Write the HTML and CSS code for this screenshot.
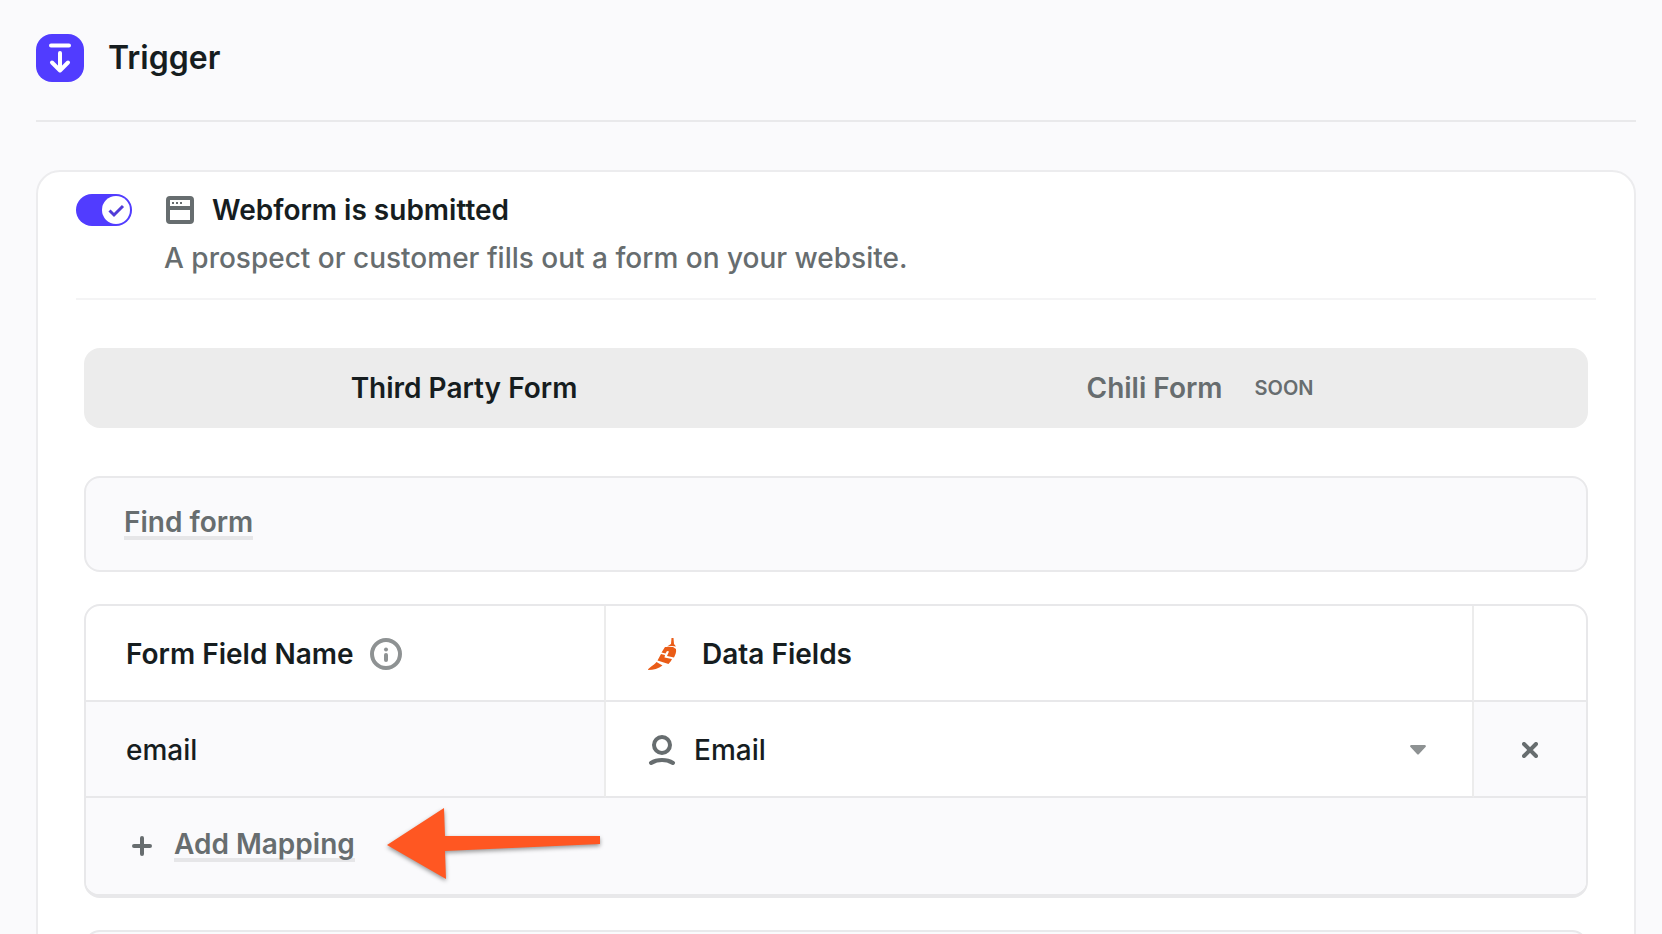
FILE: index.html
```html
<!DOCTYPE html>
<html lang="en">
  <head>
    <meta charset="UTF-8" />
    <meta name="viewport" content="width=device-width, initial-scale=1.0" />
    <title>Trigger</title>
    <link rel="stylesheet" href="styles.css">
  </head>

  <body>
    <header class="page-header">
      <span class="trigger-icon">
        <svg width="48" height="48" viewBox="0 0 48 48" fill="none" stroke="#fff" stroke-width="4" stroke-linecap="round" stroke-linejoin="round">
          <path d="M15 11.500h18M24 19v17M16 28.500l8 8 8-8" />
        </svg>
      </span>
      <h1>Trigger</h1>
    </header>

    <main class="card">
      <section class="option">
        <label class="toggle">
          <input type="checkbox" id="webform" aria-label="Webform is submitted" checked />
          <svg class="toggle-check" width="28" height="28" viewBox="0 0 28 28" fill="none" stroke="#513cd8" stroke-width="3">
            <path d="M7.500 14.500l4.500 4.500 9-9" />
          </svg>
        </label>
        <div class="option-text">
          <label class="option-title" for="webform">
            <svg width="28" height="28" viewBox="0 0 28 28">
              <rect x="2" y="2" width="24" height="24" rx="2" fill="none" stroke="#676d6f" stroke-width="4" />
              <path d="M2 12h24" stroke="#676d6f" stroke-width="4" />
              <path d="M6 6h2v2h-2zM10 6h2v2h-2zM14 6h2v2h-2z" fill="#676d6f" />
            </svg>
            Webform is submitted
          </label>
          <p>A prospect or customer fills out a form on your website.</p>
        </div>
      </section>

      <div class="content">
        <div class="tabs">
          <button type="button" class="tab active">Third Party Form</button>
          <button type="button" class="tab">Chili Form <span class="soon">SOON</span></button>
        </div>

        <div class="box">
          <button type="button" class="link-button">Find form</button>
        </div>

        <div class="mapping">
          <table>
            <colgroup>
              <col class="col-name" />
              <col />
              <col class="col-remove" />
            </colgroup>
            <thead>
              <tr>
                <th>
                  <div class="cell">
                    Form Field Name
                    <svg width="32" height="32" viewBox="0 0 32 32" fill="none" stroke="#8e9293" stroke-width="4" stroke-linecap="round">
                      <circle cx="16" cy="16" r="14" />
                      <path d="M16 17v5" />
                      <circle cx="16" cy="11.500" r="2" fill="#8e9293" stroke="none" />
                    </svg>
                  </div>
                </th>
                <th>
                  <div class="cell">
                    <svg class="chili" width="32" height="32" viewBox="0 0 32 32" fill="#ea5c17">
                      <path d="M23.500 0h2l.5 6 2 2.500-4-.5-5 .5 4-2.500z" />
                      <path d="M17 9h8l3 2c.5 3-.5 5.500-2 8.500l-7-1.500 2-4.500-2-.5-1.500 2.500-4-1z" />
                      <path d="M13 16l4 1-.5 2.500 7.500 1.500c-1 2-2 3.500-3.500 5l-11-3.500z" />
                      <path d="M8.500 24l6 3.500c-4 3-9 4.500-14.500 4.500 0-2 5-4 8.500-8z" />
                    </svg>
                    Data Fields
                  </div>
                </th>
                <th></th>
              </tr>
            </thead>
            <tbody>
              <tr>
                <td class="shaded">
                  <input type="text" class="field-name" value="email" aria-label="Form field name" />
                </td>
                <td>
                  <div class="select">
                    <svg width="28" height="32" viewBox="0 0 28 32" fill="none" stroke="#676d6f" stroke-width="4" stroke-linecap="round">
                      <circle cx="14" cy="11" r="8" />
                      <path d="M3 29c6-4 16-4 22 0" />
                    </svg>
                    <select aria-label="Data field">
                      <option>Email</option>
                    </select>
                    <svg class="caret" width="16" height="10" viewBox="0 0 16 10" fill="#8e9293">
                      <path d="M1 0h14q1.500 1 .5 2l-6.500 7q-1 1-2 0l-6.500-7q-1-1 .5-2z" />
                    </svg>
                  </div>
                </td>
                <td class="shaded">
                  <button type="button" class="remove" aria-label="Remove mapping">
                    <svg width="16" height="16" viewBox="0 0 16 16" stroke="#676d6f" stroke-width="4" stroke-linecap="round">
                      <path d="M2 2l12 12M14 2L2 14" />
                    </svg>
                  </button>
                </td>
              </tr>
            </tbody>
          </table>
          <div class="add-row">
            <svg width="20" height="20" viewBox="0 0 20 20" stroke="#676d6f" stroke-width="4" stroke-linecap="round">
              <path d="M10 2v16M2 10h16" />
            </svg>
            <button type="button" class="link-button">Add Mapping</button>
            <svg class="arrow" width="216" height="78" viewBox="0 0 216 78" fill="#ff5722">
              <path d="M0 38L57 1l1 28h155v8L58 44l1 28z" />
            </svg>
          </div>
        </div>

        <div class="box"></div>
      </div>
    </main>
  </body>
</html>
```

FILE: styles.css
```css
* {
  box-sizing: border-box;
}

body {
  margin: 0;
  padding: 0 26px 0 36px;
  height: 100vh;
  overflow: hidden;
  font-family: Inter, sans-serif;
  font-size: 28px;
  line-height: 36px;
  color: #161d1f;
  background-color: #fafafc;
}

svg {
  display: block;
  flex: none;
}

button,
input,
select {
  font: inherit;
  color: inherit;
  background: none;
  border: none;
  padding: 0;
  margin: 0;
}

button {
  cursor: pointer;
}

.page-header {
  display: flex;
  align-items: center;
  gap: 24px;
  padding: 34px 0 38px;
  border-bottom: 2px solid #e9e9eb;
}

.trigger-icon {
  background-color: #513cff;
  border-radius: 16px;
}

h1 {
  margin: 0;
  font-size: 32px;
  line-height: 40px;
  font-weight: 600;
}

.card {
  margin-top: 48px;
  padding: 22px 38px 40px;
  background-color: #fff;
  border: 2px solid #ececee;
  border-radius: 24px;
}

.option {
  display: flex;
  gap: 32px;
  padding-bottom: 22px;
  border-bottom: 2px solid #f4f4f5;
}

.toggle {
  position: relative;
  height: 32px;
}

.toggle input {
  display: block;
  appearance: none;
  width: 56px;
  height: 32px;
  border-radius: 16px;
  background-color: #676d6f;
}

.toggle input:checked {
  background-color: #513cff;
}

.toggle-check {
  position: absolute;
  top: 2px;
  right: 2px;
  border-radius: 50%;
  background-color: #fff;
}

.option-title {
  display: flex;
  align-items: center;
  gap: 18px;
  padding-left: 2px;
  line-height: 32px;
  font-weight: 600;
}

.option-text p {
  margin: 14px 0 0;
  font-weight: 500;
  color: #676d6f;
}

.content {
  padding: 48px 8px 0;
}

.tabs {
  display: flex;
  height: 80px;
  padding: 8px;
  border-radius: 16px;
  background-color: #ececec;
}

.tab {
  display: flex;
  flex: 1;
  align-items: center;
  justify-content: center;
  gap: 32px;
  font-weight: 600;
  color: #676d6f;
}

.tab.active {
  color: #161d1f;
}

.soon {
  margin-right: 16px;
  font-size: 20px;
}

.box {
  min-height: 96px;
  margin-top: 48px;
  padding: 30px 38px;
  background-color: #fafafc;
  border: 2px solid #e9e9eb;
  border-radius: 16px;
}

.link-button {
  display: block;
  line-height: 28px;
  font-weight: 600;
  color: #676d6f;
  border-bottom: 4px solid #e6e6e8;
}

.mapping {
  margin-top: 32px;
  border: 2px solid #e8e8ea;
  border-bottom-width: 4px;
  border-radius: 16px;
  overflow: hidden;
}

.box .link-button {
  margin-bottom: -2px;
}

.mapping + .box {
  margin-top: 32px;
}

table {
  width: 100%;
  table-layout: fixed;
  border-collapse: separate;
  border-spacing: 0;
}

.col-name {
  width: 520px;
}

.col-remove {
  width: 112px;
}

th,
td {
  height: 96px;
  padding: 2px 40px 0;
  text-align: left;
  border-right: 2px solid #ececec;
  border-bottom: 2px solid #e8e8ea;
}

th:nth-child(2),
td:nth-child(2) {
  padding-left: 42px;
}

th:last-child,
td:last-child {
  border-right: none;
}

.shaded {
  background-color: #fafafc;
}

.cell {
  display: flex;
  align-items: center;
  gap: 16px;
  font-weight: 600;
}

.chili {
  margin-right: 6px;
}

.field-name {
  width: 100%;
  font-weight: 500;
}

.select {
  display: flex;
  align-items: center;
  gap: 18px;
}

.select select {
  flex: 1;
  appearance: none;
  font-weight: 500;
}

.caret {
  margin-right: 6px;
}

.remove {
  display: block;
  padding: 8px;
}

.add-row {
  display: flex;
  align-items: center;
  gap: 22px;
  height: 96px;
  padding: 0 46px;
  background-color: #fafafc;
}

.arrow {
  margin-left: 10px;
  filter: drop-shadow(0 2px 2px rgba(0, 0, 0, 0.4));
}
```
